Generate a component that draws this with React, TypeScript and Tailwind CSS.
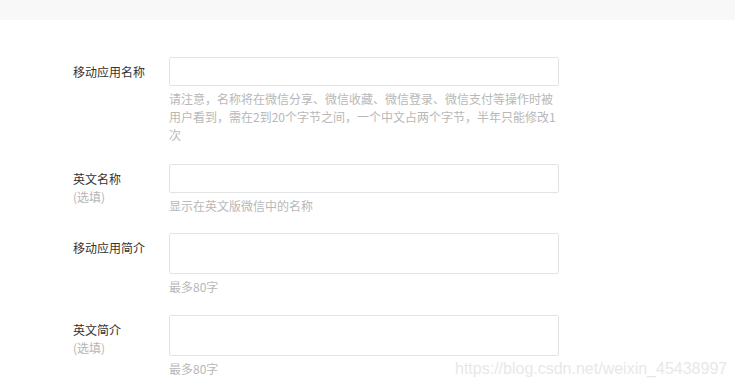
import React from 'react';

interface Field {
  label: string;
  optional?: boolean;
  multiline?: boolean;
  help: string;
  spacing: string;
}

const fields: Field[] = [
  {
    label: '移动应用名称',
    help: '请注意，名称将在微信分享、微信收藏、微信登录、微信支付等操作时被用户看到，需在2到20个字节之间，一个中文占两个字节，半年只能修改1次',
    spacing: 'mb-[20px]',
  },
  { label: '英文名称', optional: true, help: '显示在英文版微信中的名称', spacing: 'mb-[18px]' },
  { label: '移动应用简介', multiline: true, help: '最多80字', spacing: 'mb-[19px]' },
  { label: '英文简介', optional: true, multiline: true, help: '最多80字', spacing: '' },
];

const FormRow: React.FC<{ field: Field }> = ({ field }) => (
  <div className={`flex ${field.spacing}`}>
    <div className="w-[96px] shrink-0 pt-[6px] text-[12px] leading-[18px]">
      <div className="text-[#333333]">{field.label}</div>
      {field.optional && <div className="text-[#b5b5b5]">(选填)</div>}
    </div>
    <div className="w-[390px]">
      <div
        className={`w-full rounded-[2px] border border-[#e3e3e3] bg-white ${
          field.multiline ? 'h-[41px]' : 'h-[29px]'
        }`}
      />
      <p className="mt-[4px] text-[12px] leading-[18px] text-[#b8b8b8]">{field.help}</p>
    </div>
  </div>
);

export default function App() {
  return (
    <div
      className="relative h-[387px] w-[735px] overflow-hidden bg-white"
      style={{ fontFamily: '"Noto Sans CJK SC", "Noto Sans", sans-serif' }}
    >
      {/* Top bar */}
      <div className="h-[20px] bg-[#f8f8f8]" />

      {/* Form */}
      <div className="flex flex-col pl-[73px] pt-[37px]">
        {fields.map((f, i) => (
          <FormRow key={i} field={f} />
        ))}
      </div>

      {/* Watermark */}
      <div
        className="absolute left-[455px] top-[358px] text-[16px] leading-[22px] text-[#e8e8e8]"
        style={{ fontFamily: '"Liberation Sans", Arial, sans-serif' }}
      >
        https://blog.csdn.net/weixin_45438997
      </div>
    </div>
  );
}
